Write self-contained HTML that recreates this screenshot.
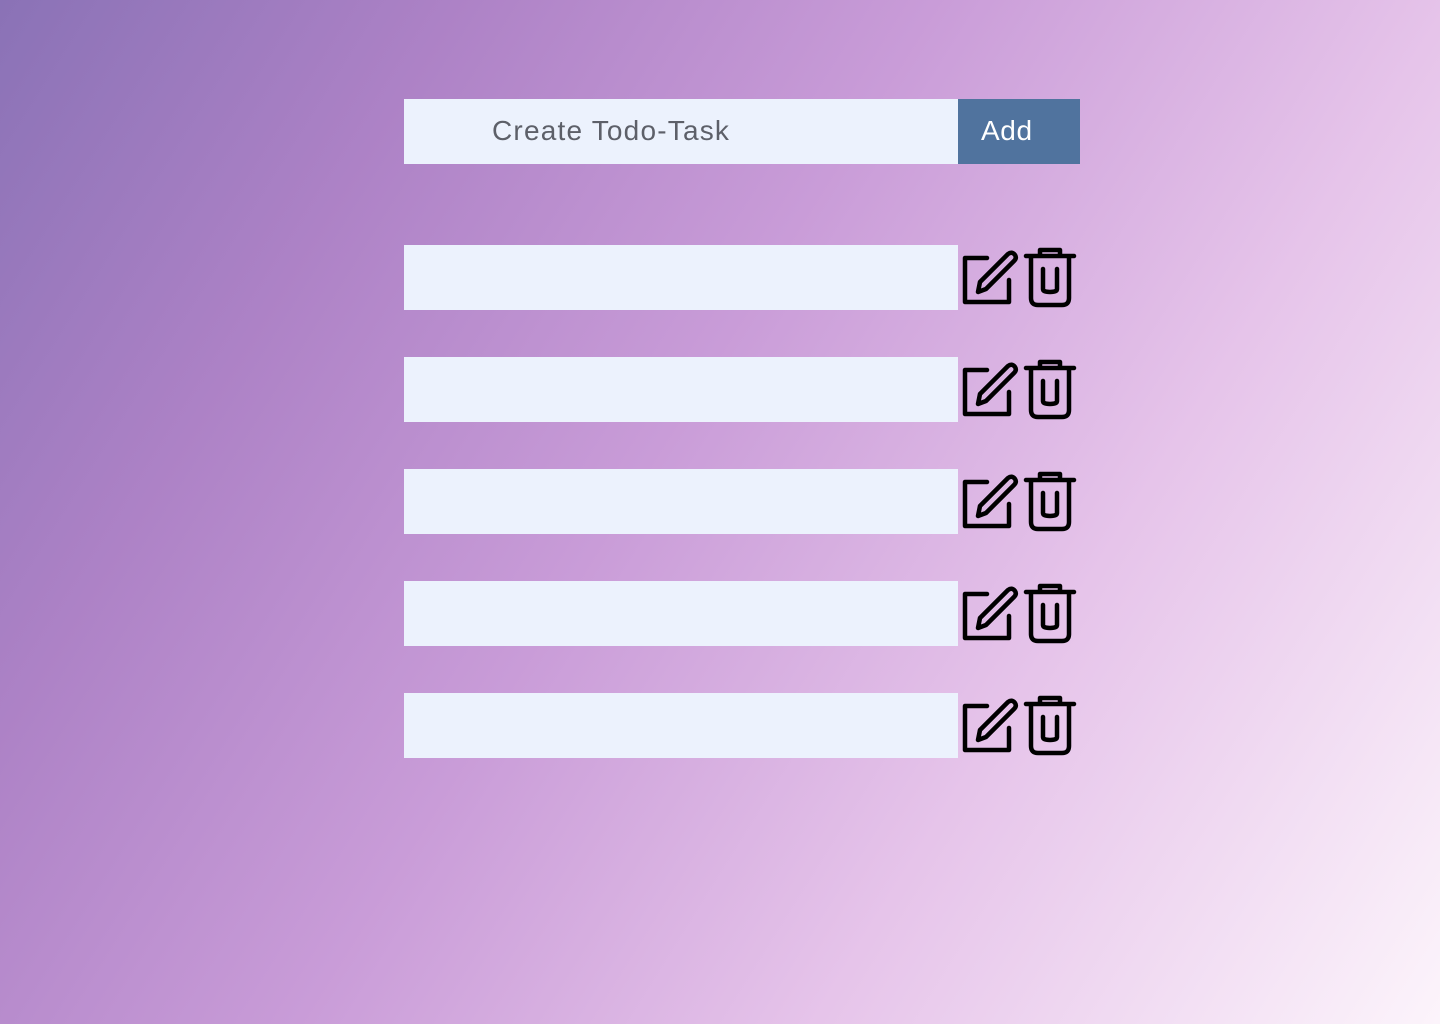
<!DOCTYPE html>
<html><head><meta charset="utf-8"><style>
html,body{margin:0;width:1440px;height:1024px;overflow:hidden}
body{background:linear-gradient(122deg,#8a72b6 0%,#ad82c6 22%,#c99cd8 45%,#e6c4ea 70%,#fcf4fb 100%);font-family:"Liberation Sans",sans-serif;position:relative}
.bar{position:absolute;left:404px;width:554px;height:65px;background:#ecf2fd}
.add{position:absolute;left:958px;top:99px;width:122px;height:65px;background:#50739e;color:#fff;font-size:28px;line-height:63px;padding-left:23px;box-sizing:border-box;letter-spacing:0.6px}
.ph{position:absolute;left:492px;top:99px;line-height:63px;font-size:28px;color:#5d6069;letter-spacing:1.2px}
svg{position:absolute;left:958px}
</style></head><body>
<div class="bar" style="top:99px"></div>
<div class="ph">Create Todo-Task</div>
<div class="add">Add</div>
<div class="bar" style="top:245px"></div>
<div class="bar" style="top:357px"></div>
<div class="bar" style="top:469px"></div>
<div class="bar" style="top:581px"></div>
<div class="bar" style="top:693px"></div>
<svg style="top:245px" width="122" height="66" viewBox="0 0 122 66"><g fill="none" stroke="#000" stroke-width="4.5" stroke-linejoin="round" stroke-linecap="round"><path d="M29 13H7V57H51V35"/><path d="M20 47L22 37L50 9Q54 6 57 10Q59 13 56 16L28 44Z"/><path d="M68 11H116M82 11V5H102V11"/><path d="M73 13V53Q73 60 80 60H104Q111 60 111 53V13"/><path d="M85 24V44M99 24V44M85 44Q85 47 92 47Q99 47 99 44"/></g></svg>
<svg style="top:357px" width="122" height="66" viewBox="0 0 122 66"><g fill="none" stroke="#000" stroke-width="4.5" stroke-linejoin="round" stroke-linecap="round"><path d="M29 13H7V57H51V35"/><path d="M20 47L22 37L50 9Q54 6 57 10Q59 13 56 16L28 44Z"/><path d="M68 11H116M82 11V5H102V11"/><path d="M73 13V53Q73 60 80 60H104Q111 60 111 53V13"/><path d="M85 24V44M99 24V44M85 44Q85 47 92 47Q99 47 99 44"/></g></svg>
<svg style="top:469px" width="122" height="66" viewBox="0 0 122 66"><g fill="none" stroke="#000" stroke-width="4.5" stroke-linejoin="round" stroke-linecap="round"><path d="M29 13H7V57H51V35"/><path d="M20 47L22 37L50 9Q54 6 57 10Q59 13 56 16L28 44Z"/><path d="M68 11H116M82 11V5H102V11"/><path d="M73 13V53Q73 60 80 60H104Q111 60 111 53V13"/><path d="M85 24V44M99 24V44M85 44Q85 47 92 47Q99 47 99 44"/></g></svg>
<svg style="top:581px" width="122" height="66" viewBox="0 0 122 66"><g fill="none" stroke="#000" stroke-width="4.5" stroke-linejoin="round" stroke-linecap="round"><path d="M29 13H7V57H51V35"/><path d="M20 47L22 37L50 9Q54 6 57 10Q59 13 56 16L28 44Z"/><path d="M68 11H116M82 11V5H102V11"/><path d="M73 13V53Q73 60 80 60H104Q111 60 111 53V13"/><path d="M85 24V44M99 24V44M85 44Q85 47 92 47Q99 47 99 44"/></g></svg>
<svg style="top:693px" width="122" height="66" viewBox="0 0 122 66"><g fill="none" stroke="#000" stroke-width="4.5" stroke-linejoin="round" stroke-linecap="round"><path d="M29 13H7V57H51V35"/><path d="M20 47L22 37L50 9Q54 6 57 10Q59 13 56 16L28 44Z"/><path d="M68 11H116M82 11V5H102V11"/><path d="M73 13V53Q73 60 80 60H104Q111 60 111 53V13"/><path d="M85 24V44M99 24V44M85 44Q85 47 92 47Q99 47 99 44"/></g></svg>
</body></html>
